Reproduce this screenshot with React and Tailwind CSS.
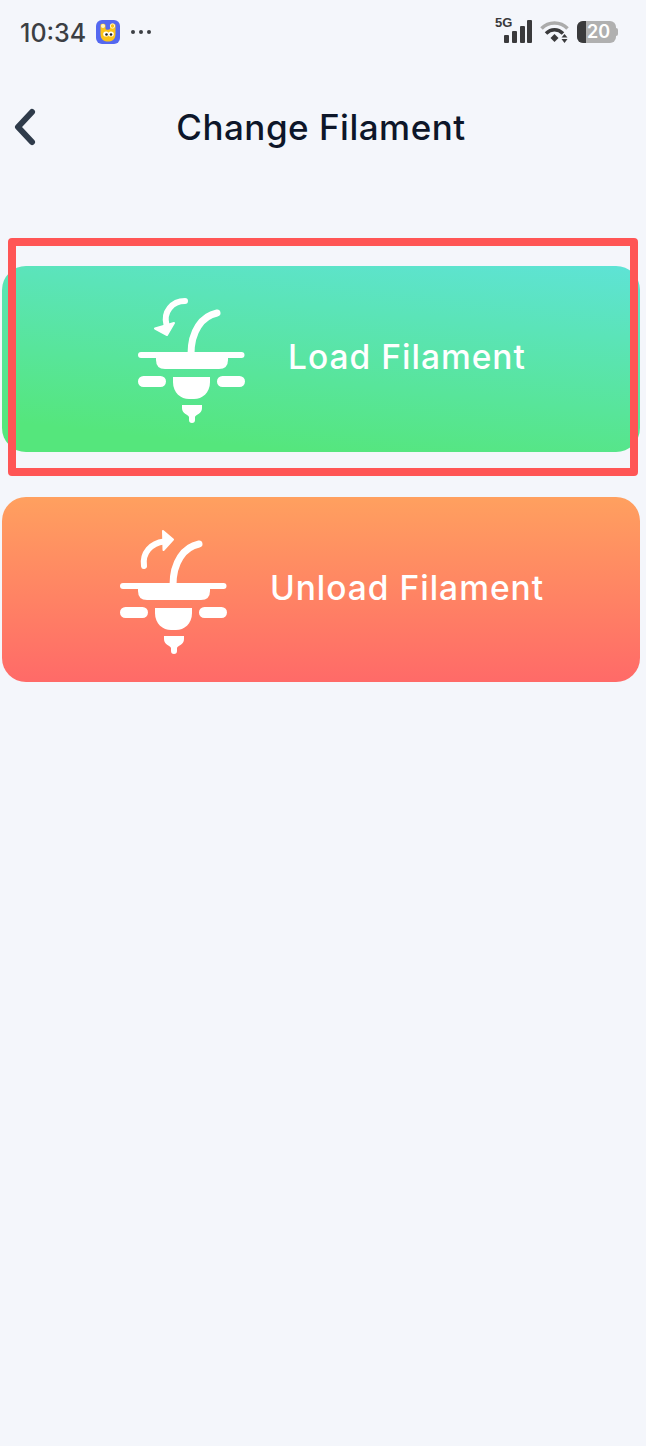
import React from "react";

function Printhead({ direction }) {
  return (
    <svg width="150" height="150" viewBox="0 0 150 150" fill="none" className="shrink-0">
      <path d="M98 29C83 32 72 47 72 70" stroke="white" strokeWidth="7" strokeLinecap="round" />
      <rect x="19" y="68" width="106.500" height="6" rx="3" fill="white" />
      <path d="M37 73H109V76Q109 85 100 85H46Q37 85 37 76Z" fill="white" />
      <rect x="19" y="92" width="28" height="11" rx="5.500" fill="white" />
      <rect x="98" y="92" width="28" height="11" rx="5.500" fill="white" />
      <path d="M54 93H91V98C91 109 83 115 75 115H70C62 115 54 109 54 98Z" fill="white" />
      <path d="M63 121H83V124C83 130 77 130 76 133V136A3 3 0 0 1 70 136V133C69 130 63 130 63 124Z" fill="white" />
      {direction === "load" ? (
        <>
          <path d="M66 17C53 17 44 28 47.500 41" stroke="white" strokeWidth="6" strokeLinecap="round" />
          <path d="M36 44.500L55 39L48 51Z" fill="white" stroke="white" strokeWidth="2" strokeLinejoin="round" />
        </>
      ) : (
        <>
          <path d="M43 51C41 38 50 28 63 26.500" stroke="white" strokeWidth="6" strokeLinecap="round" />
          <path d="M62 16L72 24.500L62.500 35Z" fill="white" stroke="white" strokeWidth="2" strokeLinejoin="round" />
        </>
      )}
    </svg>
  );
}

function AppBadge() {
  return (
    <svg width="24" height="24" viewBox="0 0 24 24">
      <rect width="24" height="24" rx="6" fill="#5468f0" />
      <path d="M4.500 5C4.500 3.500 9 3 9.500 5V9C10 10 13 10 14 9V5C14.500 3 19.500 3.500 19.500 5V14C19.500 20 15.500 21.500 12 21.500C8.500 21.500 4.500 20 4.500 14Z" fill="#fcc419" />
      <circle cx="7" cy="6" r="2" fill="#fff6c8" />
      <circle cx="16.500" cy="6" r="2.200" fill="#fcc419" stroke="#fff6c8" strokeWidth="1" />
      <ellipse cx="10" cy="14" rx="2.800" ry="2.600" fill="white" />
      <ellipse cx="15" cy="14" rx="2.800" ry="2.600" fill="white" />
      <circle cx="10.500" cy="14.500" r="1.300" fill="#222" />
      <circle cx="15" cy="14.500" r="1.300" fill="#222" />
    </svg>
  );
}

function Signal() {
  return (
    <div className="relative w-[38px] h-[24px]">
      <span className="absolute left-0 top-[-4px] font-['Liberation_Sans',sans-serif] font-bold text-[13px] leading-[14px] text-[#3a3a3c]">5G</span>
      <svg width="38" height="24" viewBox="0 0 38 24" fill="#3a3a3c">
        <rect x="9" y="15" width="5" height="8" rx="1" />
        <rect x="17" y="11" width="5" height="12" rx="1" />
        <rect x="25" y="6" width="5" height="17" rx="1" />
        <rect x="32" y="0" width="5" height="23" rx="1" />
      </svg>
    </div>
  );
}

function Wifi() {
  return (
    <svg width="30" height="24" viewBox="0 0 30 24" fill="none">
      <path d="M1.500 8.500C8.500 1 20.500 1 27.500 8.500" stroke="#ababab" strokeWidth="3.500" />
      <path d="M6 13.500C11 8.500 18 8.500 23 13.500" stroke="#3a3a3c" strokeWidth="3.500" />
      <path d="M10.500 18L14.500 14L18.500 18L14.500 22Z" fill="#3a3a3c" />
      <path d="M24.500 14L27.500 17.500H21.500Z" fill="#3a3a3c" />
      <path d="M24.500 23L27.500 19H21.500Z" fill="#3a3a3c" />
    </svg>
  );
}

function Battery() {
  return (
    <div className="flex items-center">
      <div className="relative flex w-[39px] h-[22px] rounded-[6px] overflow-hidden bg-[#b0b0b0]">
        <div className="w-[9px] bg-[#3a3a3c]" />
        <span className="ml-[1px] font-[Inter] font-semibold text-[18px] leading-[22px] text-white">20</span>
      </div>
      <div className="w-[2px] h-[8px] rounded-r-[2px] bg-[#b0b0b0]" />
    </div>
  );
}

function ActionButton({ direction, label, className }) {
  return (
    <button className={`flex items-center justify-center gap-[19px] pl-[3px] w-full rounded-[24px] ${className}`}>
      <Printhead direction={direction} />
      <span className="font-[Inter] font-medium text-[33.5px] tracking-[1px] leading-none text-white -translate-y-[1px]">{label}</span>
    </button>
  );
}

export default function App() {
  return (
    <div className="relative min-h-[1446px] bg-[#f4f6fb] pl-[2px] pr-[6px] font-[Inter]">
      <div className="flex items-center h-[64px] pl-[18px] pr-[22px]">
        <span className="font-[Inter] font-medium text-[25px] leading-none text-[#3c3f44] translate-y-[1px]">10:34</span>
        <div className="ml-[10px]"><AppBadge /></div>
        <div className="flex gap-[4px] ml-[11px]">
          <span className="w-[4px] h-[4px] rounded-full bg-[#3c3f44]" />
          <span className="w-[4px] h-[4px] rounded-full bg-[#3c3f44]" />
          <span className="w-[4px] h-[4px] rounded-full bg-[#3c3f44]" />
        </div>
        <div className="flex items-center ml-auto gap-[7px]">
          <Signal />
          <Wifi />
          <Battery />
        </div>
      </div>

      <header className="flex items-center h-[126px]">
        <svg width="40" height="40" viewBox="0 0 40 40" fill="none" className="shrink-0">
          <path d="M30 5L16 20L30 35" stroke="#2f3b4a" strokeWidth="6" strokeLinecap="round" strokeLinejoin="round" />
        </svg>
        <h1 className="flex-1 text-center font-[Inter] font-medium text-[35px] tracking-[0.5px] leading-none text-[#0d1629]">Change Filament</h1>
        <div className="w-[40px] shrink-0" />
      </header>

      <div className="flex flex-col gap-[45px] mt-[76px]">
        <ActionButton
          direction="load"
          label="Load Filament"
          className="h-[186px] bg-[linear-gradient(186deg,#5ee3d6_0%,#55e67c_88%)]"
        />
        <ActionButton
          direction="unload"
          label="Unload Filament"
          className="h-[185px] bg-[linear-gradient(180deg,#ffa05f_0%,#ff6a68_100%)]"
        />
      </div>

      <div className="absolute left-[8px] top-[238px] w-[630px] h-[238px] border-[8px] border-[#ff5555] rounded-[4px] pointer-events-none" />
    </div>
  );
}
